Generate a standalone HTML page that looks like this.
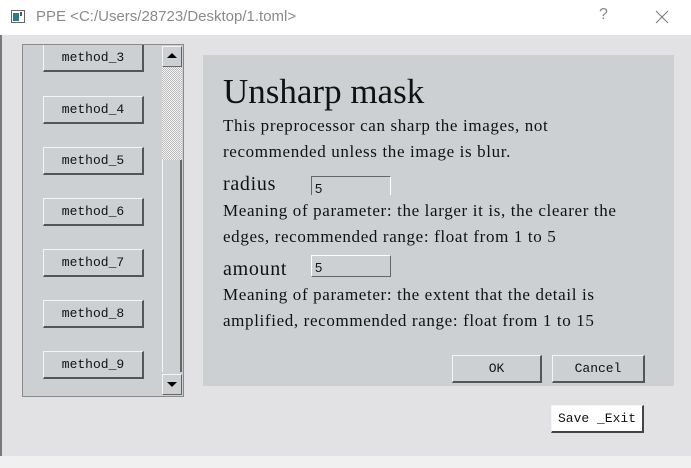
<!DOCTYPE html>
<html><head><style>
*{margin:0;padding:0;box-sizing:border-box}
body{width:691px;height:468px;position:relative;background:#e2e2e4;overflow:hidden;font-family:"Liberation Serif",serif}
.abs{position:absolute}
#title{left:0;top:0;width:691px;height:35px;background:#fff}
#title .t{left:36px;top:8px;font-family:"Liberation Sans",sans-serif;font-size:15px;color:#8a8a8a}
#bottom{left:0;top:456px;width:691px;height:12px;background:#f0f0f0}
#lb{left:0;top:35px;width:2px;height:421px;background:#7a7a7a}
#list{left:22px;top:44px;width:162px;height:353px;background:#ccd0d3;border:1px solid #8a8a8a;border-right:none;overflow:hidden}
.btn{position:absolute;background:#ccd0d3;border-top:1px solid #f4f4f4;border-left:1px solid #f4f4f4;border-right:2px solid #555;border-bottom:2px solid #555;font-family:"Liberation Mono",monospace;font-size:13px;text-align:center;color:#111}
.m{left:20px;width:101px;height:28px;line-height:25px}
#sb{left:162px;top:44px;width:22px;height:353px;border:1px solid #8a8a8a;border-left:none;background:#ccd0d3}
.arr{position:absolute;left:0;width:20px;height:21px;background:#ccd0d3;border-top:1px solid #f4f4f4;border-left:1px solid #f4f4f4;border-right:1px solid #666;border-bottom:1px solid #666}
#track{left:0;top:22px;width:20px;height:93px;background-color:#e8e8e8;background-image:repeating-conic-gradient(#bbb 0 25%,#f4f4f4 0 50%);background-size:2px 2px}
#thumb{left:0;top:115px;width:20px;height:212px;border-left:1px solid #f4f4f4;border-right:2px solid #666;background:#ccd0d3}
#panel{left:203px;top:55px;width:471px;height:331px;background:#ccd0d3;color:#111}
.txt{font-size:17px;white-space:nowrap;letter-spacing:0.64px}
.lbl{font-size:20px;letter-spacing:0.7px}
.inp{position:absolute;width:80px;height:22px;background:#ccd0d3;border-top:1px solid #666;border-left:1px solid #666;border-right:1px solid #fff;border-bottom:1px solid #fff;font-family:"Liberation Sans",sans-serif;font-size:13px;padding:4px 0 0 3px}
</style></head><body>
<div id="title" class="abs">
<svg class="abs" style="left:11px;top:10px" width="14" height="13"><rect x="0.5" y="0.5" width="13" height="12" fill="#fff" stroke="#666"/><rect x="2" y="3" width="6" height="8" fill="#2d7a8a"/><rect x="9" y="2" width="2" height="4" fill="#555"/></svg>
<div class="abs t">PPE &lt;C:/Users/28723/Desktop/1.toml&gt;</div>
<div class="abs" style="left:599px;top:6px;font-family:'Liberation Sans',sans-serif;font-size:16px;color:#888">?</div>
<svg class="abs" style="left:655px;top:10px" width="14" height="14"><path d="M1 1L13 13M13 1L1 13" stroke="#777" stroke-width="1"/></svg>
</div>
<div id="lb" class="abs"></div>
<div id="list" class="abs">
<div class="btn m" style="top:-1px">method_3</div>
<div class="btn m" style="top:51px">method_4</div>
<div class="btn m" style="top:102px">method_5</div>
<div class="btn m" style="top:153px">method_6</div>
<div class="btn m" style="top:204px">method_7</div>
<div class="btn m" style="top:255px">method_8</div>
<div class="btn m" style="top:306px">method_9</div>
</div>
<div id="sb" class="abs">
<div class="arr" style="top:1px"><svg width="18" height="19"><path d="M4 11L9 6L14 11Z" fill="#000"/></svg></div>
<div id="track" class="abs"></div>
<div id="thumb" class="abs"></div>
<div class="arr" style="top:329px"><svg width="18" height="19"><path d="M4 7L14 7L9 12Z" fill="#000"/></svg></div>
</div>
<div id="panel" class="abs">
<div class="abs" style="left:20px;top:17px;font-size:35px;white-space:nowrap">Unsharp mask</div>
<div class="abs txt" style="left:20px;top:61px">This preprocessor can sharp the images, not</div>
<div class="abs txt" style="left:20px;top:87px">recommended unless the image is blur.</div>
<div class="abs lbl" style="left:20px;top:118px">radius</div>
<div class="inp" style="left:108px;top:121px;border-bottom:none;height:19px">5</div>
<div class="abs txt" style="left:20px;top:146px">Meaning of parameter: the larger it is, the clearer the</div>
<div class="abs txt" style="left:20px;top:172px">edges, recommended range: float from 1 to 5</div>
<div class="abs lbl" style="left:20px;top:203px">amount</div>
<div class="inp" style="left:108px;top:200px;border-top:1px solid #fff;border-left:1px solid #fff;border-right:1px solid #666;border-bottom:1px solid #666">5</div>
<div class="abs txt" style="left:20px;top:230px">Meaning of parameter: the extent that the detail is</div>
<div class="abs txt" style="left:20px;top:256px">amplified, recommended range: float from 1 to 15</div>
<div class="btn" style="left:249px;top:300px;width:90px;height:28px;line-height:25px">OK</div>
<div class="btn" style="left:349px;top:300px;width:93px;height:28px;line-height:25px">Cancel</div>
</div>
<div class="btn" style="left:551px;top:405px;width:93px;height:28px;line-height:25px;background:#fff;border-right:2px solid #444;border-bottom:2px solid #444">Save _Exit</div>
<div id="bottom" class="abs"></div>
</body></html>
